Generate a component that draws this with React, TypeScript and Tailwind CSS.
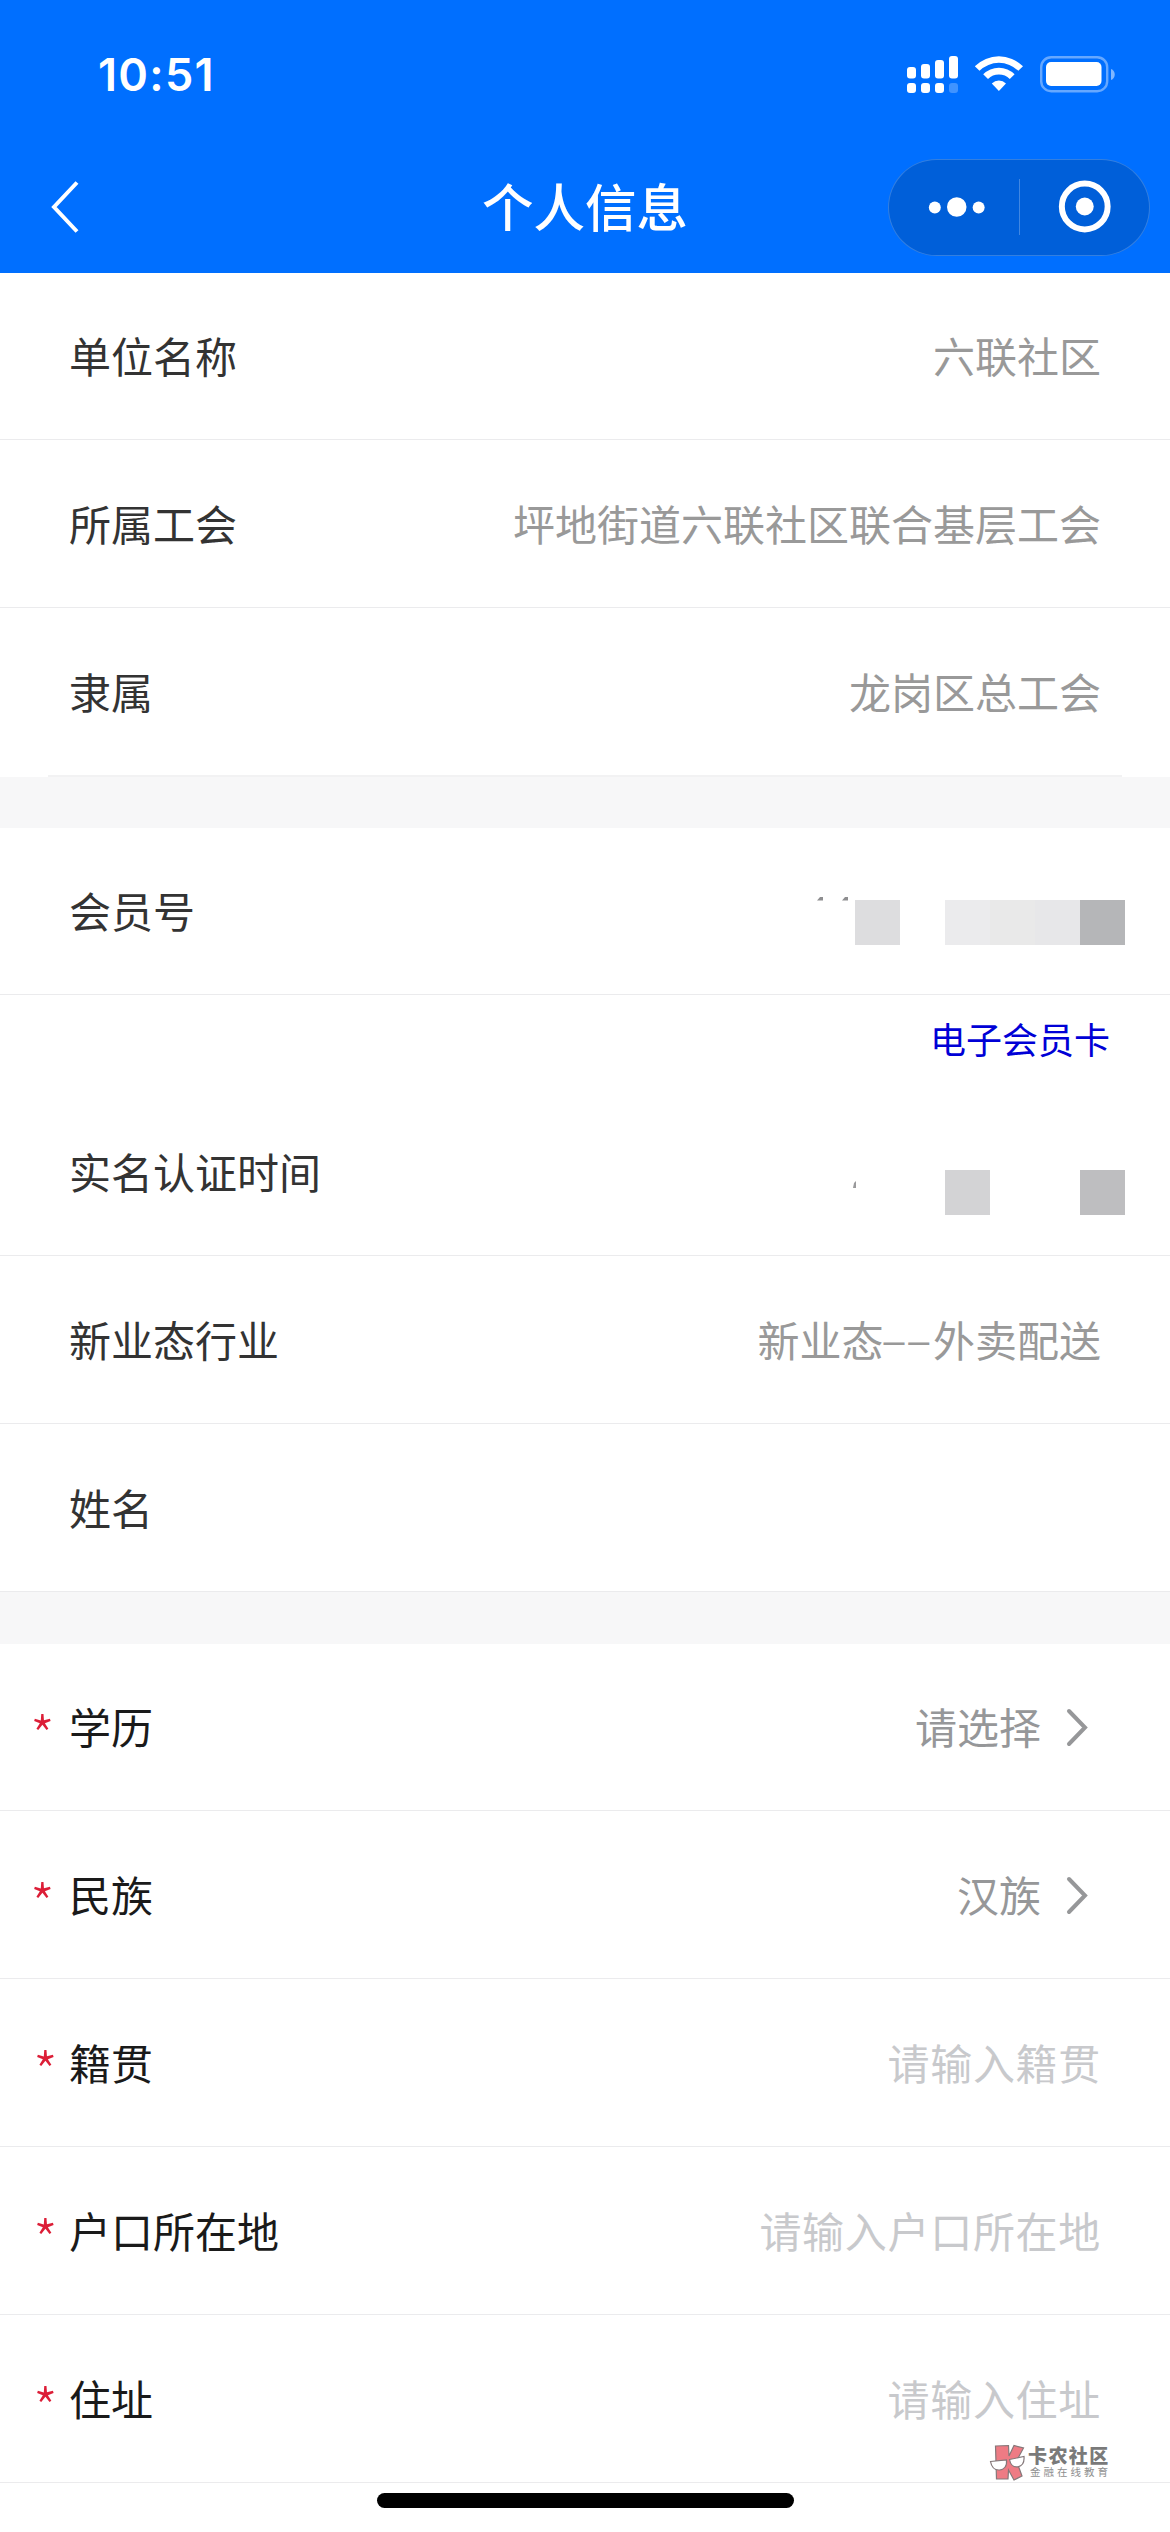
import React from "react";

const UNIT_ROWS = [
  { label: "单位名称", value: "六联社区" },
  { label: "所属工会", value: "坪地街道六联社区联合基层工会" },
];

const PICKER_ROWS = [
  { label: "学历", value: "请选择" },
  { label: "民族", value: "汉族" },
];

const INPUT_ROWS = [
  { label: "籍贯", placeholder: "请输入籍贯" },
  { label: "户口所在地", placeholder: "请输入户口所在地" },
  { label: "住址", placeholder: "请输入住址" },
];

const StatusIcons: React.FC = () => (
  <svg width="210" height="40" viewBox="0 0 210 40" fill="#fff">
    {/* Dual SIM signal */}
    <rect x="1" y="13" width="9" height="11.4" rx="3" />
    <rect x="15" y="10" width="9" height="14.4" rx="3" />
    <rect x="29" y="6" width="9" height="18.4" rx="3" />
    <rect x="43" y="2" width="9" height="22.4" rx="3" />
    <rect x="1" y="29" width="9" height="10" rx="3" />
    <rect x="15" y="29" width="9" height="10" rx="3" />
    <rect x="29" y="29" width="9" height="10" rx="3" />
    <rect x="43" y="29" width="9" height="10" rx="3" opacity="0.25" />
    {/* Wifi */}
    <path d="M68.800 12.300a34.200 34.200 0 0 1 48.200 0l-4.700 4.500a27.600 27.600 0 0 0-38.800 0z" />
    <path d="M77.200 20.300a22 22 0 0 1 31.400 0l-4.800 4.600a15.600 15.600 0 0 0-21.800 0z" />
    <path d="M85.800 29.400a10.400 10.400 0 0 1 14.200 0l-7.100 7.600z" />
    {/* Battery */}
    <rect x="135.200" y="3.200" width="66" height="34" rx="10" fill="none" stroke="#fff" strokeOpacity="0.4" strokeWidth="2.4" />
    <rect x="140" y="8" width="55.500" height="24" rx="5" />
    <path d="M205 15c5 1.600 5 9.400 0 11z" fillOpacity="0.5" />
  </svg>
);

const Header: React.FC = () => (
  <header className="h-[273px] bg-[#006fff] text-white">
    <div className="flex h-[144px] items-start justify-between pl-[98px] pr-[54px]">
      <span className="mt-[48px] font-['Inter'] text-[45px] leading-[54px] font-semibold tracking-[1.300px]">
        10:51
      </span>
      <div className="mt-[54px]">
        <StatusIcons />
      </div>
    </div>
    <div className="grid h-[126px] grid-cols-[1fr_auto_1fr] items-center">
      <svg className="ml-[49px]" width="32" height="54" viewBox="0 0 32 54" fill="none" stroke="#fff" strokeWidth="4">
        <path d="M28 2.500 5 27 28 51.500" />
      </svg>
      <h1 className="-mt-[4px] text-[51.500px] leading-[60px] font-medium">个人信息</h1>
      <div className="mr-[20px] flex h-[97px] w-[262px] items-center justify-self-end rounded-full border border-white/20 bg-[#005fd9]">
        <svg className="flex-1" height="94" viewBox="0 0 130 94" fill="#fff">
          <circle cx="46" cy="47.500" r="6" />
          <circle cx="68" cy="47" r="9.800" />
          <circle cx="90" cy="47.500" r="6" />
        </svg>
        <div className="h-[56px] w-px bg-white/25"></div>
        <svg className="flex-1" height="94" viewBox="0 0 130 94" fill="none">
          <circle cx="65" cy="46.500" r="23" stroke="#fff" strokeWidth="6" />
          <circle cx="65" cy="46.500" r="9" fill="#fff" />
        </svg>
      </div>
    </div>
  </header>
);

interface RowProps {
  label: string;
  required?: boolean;
  wideMark?: boolean;
  children?: React.ReactNode;
}

const Row: React.FC<RowProps> = ({ label, required, wideMark, children }) => (
  <div className="flex h-[168px] items-center justify-between border-b border-[#ebebed] first:h-[167px]">
    <div className="flex items-center pb-[2px]">
      <span
        className={`h-[50px] w-[69px] pt-[8px] text-[56px] leading-[50px] font-light text-[#dc1e37] ${
          wideMark ? "pl-[33px]" : "pl-[30px]"
        }`}
      >
        {required && "*"}
      </span>
      <span className={required ? "text-[#1a1a1a]" : "text-[#333]"}>{label}</span>
    </div>
    {children}
  </div>
);

const Value: React.FC<{ children: React.ReactNode }> = ({ children }) => (
  <span className="mr-[69px] pb-[2px] text-[#999]">{children}</span>
);

const Chevron: React.FC = () => (
  <svg width="24" height="40" viewBox="0 0 24 40" fill="none" stroke="#969799" strokeWidth="4" strokeLinecap="round">
    <path d="M4 4 20 20.500 4 37" />
  </svg>
);

const App: React.FC = () => {
  return (
    <div className="relative h-[2532px] w-[1170px] overflow-hidden bg-white font-['Noto_Sans_CJK_SC',sans-serif] text-[42px] leading-[60px]">
      <Header />

      <section>
        {UNIT_ROWS.map((row) => (
          <Row key={row.label} label={row.label}>
            <Value>{row.value}</Value>
          </Row>
        ))}
        <div className="flex h-[167px] items-center justify-between">
          <span className="pb-[2px] pl-[69px] text-[#333]">隶属</span>
          <Value>龙岗区总工会</Value>
        </div>
        <div className="mx-[48px] h-[2px] bg-[#f2f2f3]"></div>
      </section>

      <div className="h-[51px] bg-[#f7f7f8]"></div>

      <section>
        <Row label="会员号">
          {/* Masked member number */}
          <div className="mt-[22px] mr-[45px] flex h-[45px]">
            <svg width="38" height="10" viewBox="0 0 38 10" className="-mt-[4px]" fill="#8e8e90">
              <path d="M0 4.500 3 1h3V4.500zM25 4.500 28 1h3V4.500z" />
            </svg>
            <div className="w-[45px] bg-[#dddddf]"></div>
            <div className="w-[45px]"></div>
            <div className="w-[45px] bg-[#ebebed]"></div>
            <div className="w-[45px] bg-[#e9e9e9]"></div>
            <div className="w-[45px] bg-[#e7e7e9]"></div>
            <div className="w-[45px] bg-[#b5b6b8]"></div>
          </div>
        </Row>
        <div className="flex h-[93px] items-center justify-end pr-[60px] pb-[7px]">
          <a className="text-[36px] text-[#0000d6]">电子会员卡</a>
        </div>
        <Row label="实名认证时间">
          {/* Masked date */}
          <div className="mt-[41px] mr-[45px] flex h-[45px]">
            <svg width="92" height="20" viewBox="0 0 92 20" fill="#9a9a9c">
              <path d="M0 18 1 13 3 11v7z" />
            </svg>
            <div className="w-[45px] bg-[#d3d3d5]"></div>
            <div className="w-[90px]"></div>
            <div className="w-[45px] bg-[#bebec0]"></div>
          </div>
        </Row>
        <Row label="新业态行业">
          <Value>
            新业态<span className="font-['Inter'] leading-none font-light tracking-[3.700px]">––</span>外卖配送
          </Value>
        </Row>
        <Row label="姓名" />
      </section>

      <div className="h-[52px] bg-[#f7f7f8]"></div>

      <section>
        {PICKER_ROWS.map((row) => (
          <Row key={row.label} label={row.label} required>
            <div className="mr-[81px] flex items-center gap-[24px] text-[#969799]">
              <span className="pb-[2px]">{row.value}</span>
              <Chevron />
            </div>
          </Row>
        ))}
        {INPUT_ROWS.map((row) => (
          <Row key={row.label} label={row.label} required wideMark>
            <span className="mr-[69px] pb-[1px] tracking-[0.700px] text-[#c8c9cc]">{row.placeholder}</span>
          </Row>
        ))}
      </section>

      {/* Watermark */}
      <div className="absolute top-[2444px] left-[989px] flex">
        <svg width="37" height="38" viewBox="0 0 37 38" stroke="#85787a" strokeWidth="1.200">
          <path fill="#ee7b84" d="M6.500 2 19.500 1.500 20 12 25 1.500 34.500 4 27.500 17 33 32 25 36 19.500 26 19 35 7.500 35z" />
          <path fill="#fff" d="M1.500 17.500 17.500 16c.8 6.500-2.500 9.500-7 10C5.500 26.300 2.500 23 1.500 17.500z" />
          <path fill="#fff" d="M20.500 15.500 35 12.500c.5 6-2 9.500-6 10.300-4.500.7-7.500-2-8.500-7.300z" />
        </svg>
        <div className="flex flex-col">
          <span className="ml-[2px] text-[19px] leading-[22px] font-black tracking-[1.400px] text-[#7a7a7a]">
            卡农社区
          </span>
          <span className="ml-[4px] text-[10.500px] leading-[12px] tracking-[3px] text-[#8f8f8f]">金融在线教育</span>
        </div>
      </div>

      {/* Home indicator */}
      <div className="absolute bottom-[24px] left-[377px] h-[15px] w-[417px] rounded-full bg-black"></div>
    </div>
  );
};

export default App;
